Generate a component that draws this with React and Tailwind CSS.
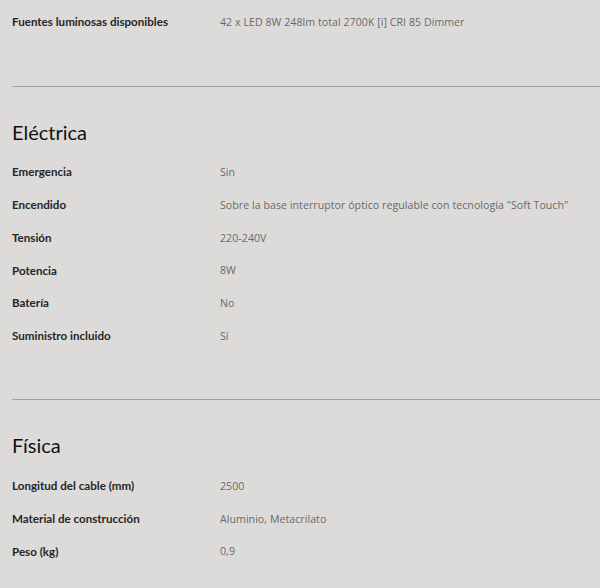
import React from "react";

const Row = ({ label, value }) => (
  <div className="flex items-center h-[32.8px]">
    <div className="w-[208px] text-[11.6px] font-bold text-[#262626]">{label}</div>
    <div className="text-[10.6px] leading-[14px] tracking-[0.05px] text-[#6a6a6a]" style={{ fontFamily: "'Open Sans', Lato, sans-serif" }}>{value}</div>
  </div>
);

const Divider = () => <div className="h-px bg-[#a3a3a3] ml-3" />;

const Heading = ({ children }) => (
  <h2 className="text-[20px] leading-[24px] text-[#111] pl-3 pt-[33px] pb-[12px]">{children}</h2>
);

export default function App() {
  return (
    <div className="w-[600px] h-[588px] bg-[#dcdbd9] overflow-hidden" style={{ fontFamily: "Lato, 'Open Sans', sans-serif" }}>
      <div className="pl-3 pt-[5.6px]">
        <Row label="Fuentes luminosas disponibles" value="42 x LED 8W 248lm total 2700K [i] CRI 85 Dimmer" />
      </div>
      <div className="h-[47.2px]" />
      <Divider />
      <Heading>Eléctrica</Heading>
      <div className="pl-3">
        <Row label="Emergencia" value="Sin" />
        <Row label="Encendido" value={'Sobre la base interruptor óptico regulable con tecnología "Soft Touch"'} />
        <Row label="Tensión" value="220-240V" />
        <Row label="Potencia" value="8W" />
        <Row label="Batería" value="No" />
        <Row label="Suministro incluido" value="Sí" />
      </div>
      <div className="h-[47px]" />
      <Divider />
      <Heading>Física</Heading>
      <div className="pl-3">
        <Row label="Longitud del cable (mm)" value="2500" />
        <Row label="Material de construcción" value="Aluminio, Metacrilato" />
        <Row label="Peso (kg)" value="0,9" />
      </div>
    </div>
  );
}
